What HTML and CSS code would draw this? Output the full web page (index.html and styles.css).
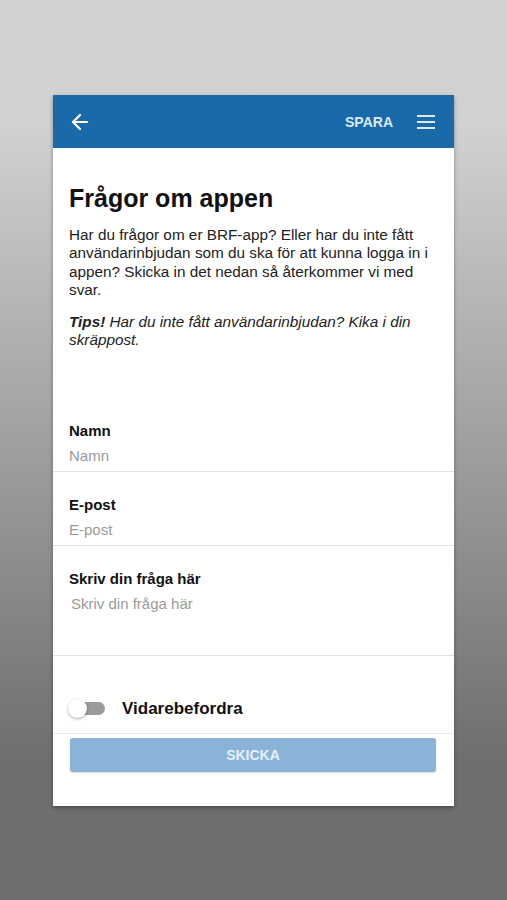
FILE: index.html
```html
<!DOCTYPE html>
<html lang="sv">
<head>
  <meta charset="UTF-8" />
  <meta name="viewport" content="width=device-width, initial-scale=1" />
  <title>Frågor om appen</title>
  <link rel="stylesheet" href="styles.css">
</head>
<body>
  <div class="card">
    <header class="app-bar">
      <button class="icon-btn" aria-label="Tillbaka">
        <svg viewBox="0 0 20 20" aria-hidden="true">
          <line x1="3" y1="10" x2="17" y2="10" />
          <polyline points="10,3 3,10 10,17" />
        </svg>
      </button>
      <span class="save">SPARA</span>
      <button class="icon-btn menu" aria-label="Meny">
        <svg viewBox="0 0 20 20" aria-hidden="true">
          <line x1="1" y1="4" x2="19" y2="4" />
          <line x1="1" y1="10" x2="19" y2="10" />
          <line x1="1" y1="16" x2="19" y2="16" />
        </svg>
      </button>
    </header>

    <section class="intro">
      <h1>Frågor om appen</h1>
      <p>Har du frågor om er BRF-app? Eller har du inte fått användarinbjudan som du ska för att kunna logga in i appen? Skicka in det nedan så återkommer vi med svar.</p>
      <p class="tips"><b>Tips!</b>&nbsp;Har du inte fått användarinbjudan? Kika i din skräppost.</p>
    </section>

    <form class="question-form">
      <label class="field">
        <span class="field-label">Namn</span>
        <input type="text" placeholder="Namn" />
      </label>
      <label class="field">
        <span class="field-label">E-post</span>
        <input type="email" placeholder="E-post" />
      </label>
      <label class="field">
        <span class="field-label">Skriv din fråga här</span>
        <textarea placeholder="Skriv din fråga här"></textarea>
      </label>
      <label class="toggle-row">
        <span class="switch"><span class="knob"></span></span>
        <span class="toggle-label">Vidarebefordra</span>
      </label>
      <button type="submit" class="send" disabled>SKICKA</button>
    </form>
  </div>
</body>
</html>
```

FILE: styles.css
```css
* {
  margin: 0;
  padding: 0;
  box-sizing: border-box;
}
body {
  font-family: "Liberation Sans", Arial, sans-serif;
  min-height: 900px;
  background: linear-gradient(to bottom, #d3d3d3 0%, #d1d1d1 14%, #6f6f6f 84%, #6f6f6f 100%);
  color: #111;
  padding-top: 95px;
}

/* Card */
.card {
  width: 401px;
  margin: 0 auto;
  background: #fff;
  box-shadow: 0 2px 4px rgba(0,0,0,0.35);
}

/* Top bar */
.app-bar {
  height: 53px;
  background: #1a6aa9;
  display: flex;
  align-items: center;
  padding: 0 17px 0 16px;
}
.icon-btn {
  background: none;
  border: none;
  width: 22px;
  height: 22px;
  display: flex;
  align-items: center;
  justify-content: center;
}
.icon-btn svg {
  width: 20px;
  height: 20px;
  fill: none;
  stroke: #fff;
  stroke-width: 2.2;
  stroke-linecap: round;
  stroke-linejoin: round;
}
.icon-btn.menu svg {
  stroke: #dce8f3;
  stroke-width: 2;
  stroke-linecap: butt;
}
.save {
  margin-left: auto;
  margin-right: 22px;
  color: #dce8f3;
  font-weight: 700;
  font-size: 14px;
}

/* Intro text */
.intro {
  padding: 36px 16px 0;
}
.intro h1 {
  font-size: 25px;
  line-height: 28px;
  font-weight: 700;
  margin-bottom: 14px;
}
.intro p {
  font-size: 15.3px;
  line-height: 18.3px;
  color: #222;
  margin-bottom: 14px;
}
.intro .tips {
  font-style: italic;
}

/* Form */
.question-form {
  margin-top: 72px;
  display: flex;
  flex-direction: column;
}
.field {
  display: flex;
  flex-direction: column;
  gap: 7px;
  padding: 24px 16px 6px;
  border-bottom: 1px solid #e2e2e2;
}
.question-form .field:first-child {
  padding-top: 0;
}
.field-label {
  font-size: 15px;
  line-height: 18px;
  font-weight: 700;
}
.field input,
.field textarea {
  border: none;
  outline: none;
  font-family: inherit;
  font-size: 15px;
  line-height: 18px;
  height: 18px;
  color: #111;
  background: transparent;
}
.field textarea {
  height: 54px;
  resize: none;
  padding-left: 2px;
}
.field input::placeholder,
.field textarea::placeholder {
  color: #9a9a9a;
}

/* Toggle */
.toggle-row {
  display: flex;
  align-items: center;
  gap: 17px;
  padding: 42px 16px 13px;
  height: 78px;
  border-bottom: 1px solid #ececec;
}
.switch {
  position: relative;
  width: 36px;
  height: 13px;
  background: #9b9b9b;
  border-radius: 7px;
}
.knob {
  position: absolute;
  left: -1px;
  top: -3px;
  width: 19px;
  height: 19px;
  border-radius: 50%;
  background: #fff;
  box-shadow: 0 1px 3px rgba(0,0,0,0.35);
}
.toggle-label {
  font-size: 17px;
  font-weight: 700;
}

/* Send button */
.send {
  margin: 4px 18px 34px 17px;
  height: 34px;
  border: none;
  border-radius: 3px;
  background: #8ab4d7;
  color: #e8f0f7;
  font-family: inherit;
  font-size: 14px;
  font-weight: 700;
  box-shadow: 0 1px 2px rgba(0,0,0,0.15);
}
```
